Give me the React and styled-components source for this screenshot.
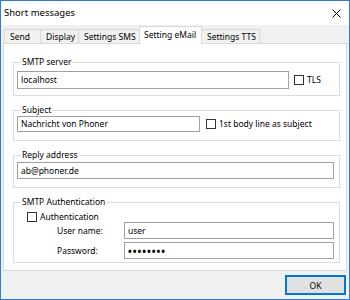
import React from 'react';
import styled, { createGlobalStyle } from 'styled-components';

const Global = createGlobalStyle`
   body {
      margin: 0;
      background: #fff;
   }
`

const Window = styled.div`
   width: 350px;
   height: 300px;
   box-sizing: border-box;
   border: 1px solid #2f7dd1;
   background: #f0f0f0;
   display: flex;
   flex-direction: column;
   font-family: "Noto Sans", "DejaVu Sans", sans-serif;
   font-size: 8.5px;
   line-height: 12px;
   color: #000;
   overflow: hidden;
`

const TitleBar = styled.div`
   height: 24px;
   flex: none;
   background: #fff;
   display: flex;
   align-items: center;
   justify-content: space-between;
   padding: 0 8px 0 3px;
   font-size: 9.5px;
`

const Body = styled.div`
   height: 246px;
   flex: none;
   display: flex;
   flex-direction: column;
   padding: 1px 2px 0 2px;
   box-sizing: border-box;
`

const TabStrip = styled.div`
   height: 18px;
   flex: none;
   display: flex;
   align-items: flex-end;
   padding-left: 1px;
   margin-bottom: -1px;
   position: relative;
   z-index: 1;
`

const Tab = styled.div`
   box-sizing: border-box;
   width: ${props => props.w}px;
   height: ${props => props.active ? '18px' : '15px'};
   margin-left: -1px;
   border: 1px solid #d9d9d9;
   border-bottom: ${props => props.active ? 'none' : '1px solid #d9d9d9'};
   background: ${props => props.active ? '#fff' : '#f0f0f0'};
   display: flex;
   align-items: center;
   padding: ${props => props.active ? '0 0 2px 4px' : '0 0 0 5px'};
   white-space: nowrap;
   &:first-child {
      margin-left: 0;
   }
`

const Page = styled.div`
   flex: 1;
   min-height: 0;
   background: #fff;
   border: 1px solid #d9d9d9;
   padding: 12px 6px 0 9px;
   display: flex;
   flex-direction: column;
   gap: 8px;
`

const Group = styled.fieldset`
   margin: 0;
   min-width: 0;
   border: 1px solid #dcdcdc;
   padding: 0 5px ${props => props.pb ?? 8}px 3px;
`

const Legend = styled.legend`
   padding: 0 1px;
   margin-left: 4px;
   line-height: 12px;
   height: 12px;
`

const Row = styled.div`
   display: flex;
   align-items: center;
   margin-top: ${props => props.mt ?? 0}px;
`

const Input = styled.div`
   box-sizing: border-box;
   height: ${props => props.h || 17}px;
   width: ${props => props.w ? `${props.w}px` : 'auto'};
   flex: ${props => props.w ? 'none' : '1'};
   border: 1px solid #a0a0a0;
   background: #fff;
   display: flex;
   align-items: center;
   padding-left: 3px;
   white-space: nowrap;
   letter-spacing: ${props => props.secret ? '1px' : '0'};
   font-size: ${props => props.secret ? '10px' : 'inherit'};
   font-weight: ${props => props.secret ? 'bold' : 'normal'};
`

const Check = styled.label`
   display: flex;
   align-items: center;
   height: ${props => props.h || 12}px;
   gap: 3px;
   margin-left: ${props => props.ml || 0}px;
   white-space: nowrap;
`

const Box = styled.span`
   box-sizing: border-box;
   width: 10px;
   height: 10px;
   flex: none;
   border: 1px solid #333;
   background: #fff;
`

const FieldLabel = styled.span`
   width: 67px;
   margin-left: 40px;
   flex: none;
`

const Footer = styled.div`
   flex: 1;
   display: flex;
   justify-content: flex-end;
   align-items: flex-start;
   padding: 4px 3px 0 0;
`

const Button = styled.button`
   box-sizing: border-box;
   width: 61px;
   height: 20px;
   border: 2px solid #0078d7;
   background: #e1e1e1;
   font-family: inherit;
   font-size: 8.5px;
   color: #000;
   padding: 0;
`

const CloseIcon = () => (
   <svg width="9" height="9" viewBox="0 0 9 9">
      <path d="M0.5 0.5 L8.5 8.5 M8.5 0.5 L0.5 8.5" stroke="#000" strokeWidth="1" />
   </svg>
);

const App = () => {
   return (
      <Window>
         <Global />
         <TitleBar>
            <span>Short messages</span>
            <CloseIcon />
         </TitleBar>
         <Body>
            <TabStrip>
               <Tab w={37}>Send</Tab>
               <Tab w={39}>Display</Tab>
               <Tab w={62}>Settings SMS</Tab>
               <Tab w={63} active>Setting eMail</Tab>
               <Tab w={59}>Settings TTS</Tab>
            </TabStrip>
            <Page>
               <Group pb={6}>
                  <Legend>SMTP server</Legend>
                  <Row mt={3}>
                     <Input w={272} h={18}>localhost</Input>
                     <Check ml={5}><Box />TLS</Check>
                  </Row>
               </Group>
               <Group>
                  <Legend>Subject</Legend>
                  <Row>
                     <Input w={183} h={16}>Nachricht von Phoner</Input>
                     <Check ml={6}><Box />1st body line as subject</Check>
                  </Row>
               </Group>
               <Group>
                  <Legend>Reply address</Legend>
                  <Row mt={1}>
                     <Input>ab@phoner.de</Input>
                  </Row>
               </Group>
               <Group pb={3}>
                  <Legend>SMTP Authentication</Legend>
                  <Row mt={4}>
                     <Check ml={10} h={10}><Box />Authentication</Check>
                  </Row>
                  <Row>
                     <FieldLabel>User name:</FieldLabel>
                     <Input>user</Input>
                  </Row>
                  <Row mt={3}>
                     <FieldLabel>Password:</FieldLabel>
                     <Input secret>••••••••</Input>
                  </Row>
               </Group>
            </Page>
         </Body>
         <Footer>
            <Button>OK</Button>
         </Footer>
      </Window>
   );
}

export default App;
